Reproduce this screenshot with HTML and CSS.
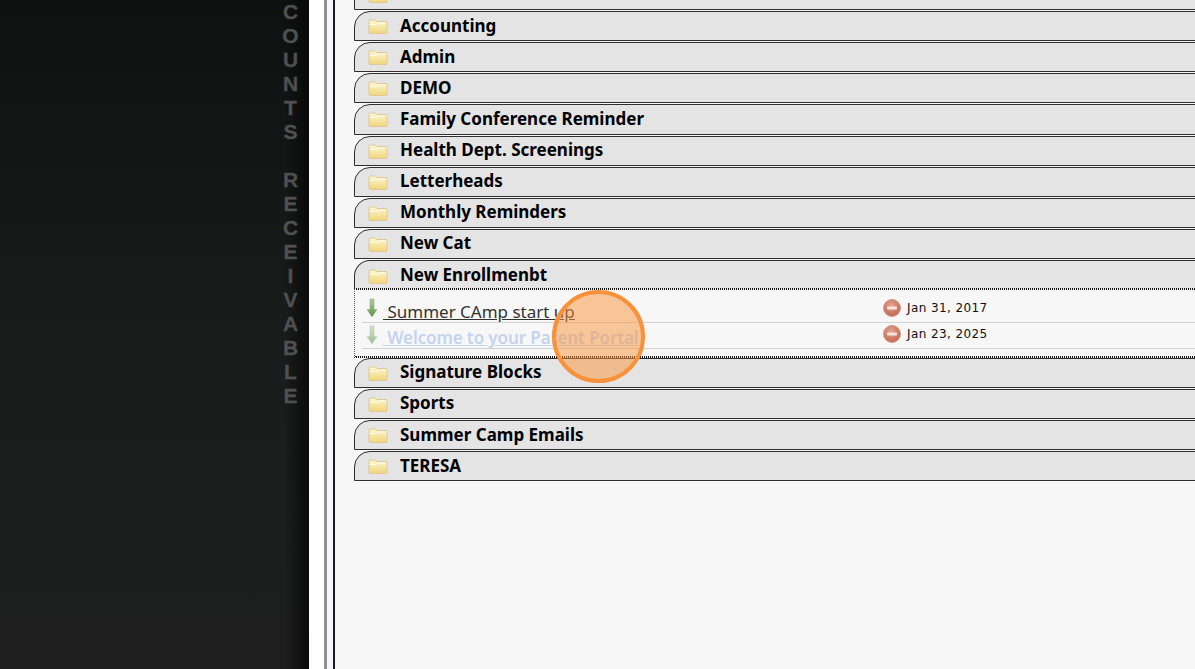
FILE: index.html
```html
<html>
<head>
<title>Accounts Receivable</title>
<link rel="stylesheet" href="styles.css">
</head>
<body>

<svg class="iconDefs">
	<defs>
		<linearGradient id="folderFill" x1="0" y1="0" x2="0" y2="1">
			<stop offset="0" stop-color="#fdf6cf"/>
			<stop offset="1" stop-color="#f0d67c"/>
		</linearGradient>
		<linearGradient id="arrowFill" x1="0" y1="0" x2="0" y2="1">
			<stop offset="0" stop-color="#b3cda1"/>
			<stop offset="1" stop-color="#5d9147"/>
		</linearGradient>
		<radialGradient id="minusFill" cx="0.45" cy="0.35" r="0.75">
			<stop offset="0" stop-color="#e6a594"/>
			<stop offset="1" stop-color="#bb5c46"/>
		</radialGradient>
	</defs>
	<symbol id="folder" viewBox="0 0 20 15">
		<path d="M1 2Q1 1 2 1H7.500L9 2.500H18Q19 2.500 19 3.500V13.500Q19 14.500 18 14.500H2Q1 14.500 1 13.500Z" fill="url(#folderFill)" stroke="#e0c795"/>
		<path d="M2 5.500H9L10.500 4H18" fill="none" stroke="#fffdf0"/>
	</symbol>
	<symbol id="arrow" viewBox="0 0 12 20">
		<path d="M4 1H8V11.500H11L6 19L1 11.500H4Z" fill="url(#arrowFill)" stroke="#8fb07c" stroke-width="0.6"/>
	</symbol>
	<symbol id="minus" viewBox="0 0 18 18">
		<circle cx="9" cy="9" r="8.500" fill="url(#minusFill)" stroke="#d09a8a"/>
		<rect x="4" y="7.500" width="10" height="3" rx="1" fill="#f6e4dc"/>
	</symbol>
</svg>

<div class="page">
	<div class="sidePanel">
		<div class="sideTitle">
			<span>C</span><span>O</span><span>U</span><span>N</span><span>T</span><span>S</span><span>&nbsp;</span>
			<span>R</span><span>E</span><span>C</span><span>E</span><span>I</span><span>V</span><span>A</span><span>B</span><span>L</span><span>E</span>
		</div>
	</div>
	<div class="whiteGap"></div>
	<div class="greyRule"></div>
	<div class="mainPanel">
		<div class="catList">
			<div class="catRow"><svg class="folderIcon"><use href="#folder"/></svg>Unclassified</div>
			<div class="catRow"><svg class="folderIcon"><use href="#folder"/></svg>Accounting</div>
			<div class="catRow"><svg class="folderIcon"><use href="#folder"/></svg>Admin</div>
			<div class="catRow"><svg class="folderIcon"><use href="#folder"/></svg>DEMO</div>
			<div class="catRow"><svg class="folderIcon"><use href="#folder"/></svg>Family Conference Reminder</div>
			<div class="catRow"><svg class="folderIcon"><use href="#folder"/></svg>Health Dept. Screenings</div>
			<div class="catRow"><svg class="folderIcon"><use href="#folder"/></svg>Letterheads</div>
			<div class="catRow"><svg class="folderIcon"><use href="#folder"/></svg>Monthly Reminders</div>
			<div class="catRow"><svg class="folderIcon"><use href="#folder"/></svg>New Cat</div>
			<div class="catRow open"><svg class="folderIcon"><use href="#folder"/></svg>New Enrollmenbt</div>
			<div class="catBody">
				<div class="docRow first">
					<svg class="arrowIcon"><use href="#arrow"/></svg>
					<a class="docLink" href="#">&nbsp;Summer CAmp start up</a>
					<span class="docDate"><svg class="minusIcon"><use href="#minus"/></svg>Jan 31, 2017</span>
				</div>
				<div class="docRow visited">
					<svg class="arrowIcon"><use href="#arrow"/></svg>
					<a class="docLink" href="#">&nbsp;Welcome to your Parent Portal</a>
					<span class="docDate"><svg class="minusIcon"><use href="#minus"/></svg>Jan 23, 2025</span>
				</div>
			</div>
			<div class="catRow"><svg class="folderIcon"><use href="#folder"/></svg>Signature Blocks</div>
			<div class="catRow"><svg class="folderIcon"><use href="#folder"/></svg>Sports</div>
			<div class="catRow"><svg class="folderIcon"><use href="#folder"/></svg>Summer Camp Emails</div>
			<div class="catRow"><svg class="folderIcon"><use href="#folder"/></svg>TERESA</div>
		</div>
	</div>
</div>

<div class="clickMark"></div>

</body>
</html>
```

FILE: styles.css
```css
html, body {
	margin: 0;
	height: 100%;
	overflow: hidden;
}
body {
	background-color: #fff;
	font-family: "Noto Sans", sans-serif;
}
.iconDefs {
	position: absolute;
	width: 0;
	height: 0;
}
.page {
	display: flex;
	height: 669px;
}
.sidePanel {
	width: 309px;
	flex: none;
	overflow: hidden;
	background: linear-gradient(to right, rgba(8, 8, 8, 0) 285px, rgba(8, 8, 8, 0.9) 309px), linear-gradient(#0f1111, #1a1c1c 50%, #1e1e1e);
}
.sideTitle {
	display: flex;
	flex-direction: column;
	align-items: center;
	width: 20px;
	margin-left: 280.5px;
	font-family: "Liberation Sans", sans-serif;
	font-size: 21px;
	font-weight: bold;
	line-height: 24px;
	color: #505053;
	-webkit-text-stroke: 0.3px #505053;
}
.whiteGap {
	width: 15px;
	flex: none;
}
.greyRule {
	width: 6px;
	flex: none;
	border-left: 3px solid #8f8f8f;
	background-color: #f4f6ff;
}
.mainPanel {
	flex: 1;
	min-width: 0;
	border-left: 2px solid #1a1a1a;
	background-color: #f7f7f7;
	padding-left: 19px;
}
.catList {
	margin: -20.125px -30px 0 0;
}
.catRow {
	display: flex;
	align-items: center;
	box-sizing: border-box;
	height: 30.125px;
	margin-bottom: 1px;
	padding: 0 0 2px 13px;
	border: 1px solid #2e2e2e;
	border-top-left-radius: 16px;
	background-color: #e4e4e4;
	font-size: 17px;
	font-weight: 700;
	color: #000;
}
.catRow.open {
	height: 29.125px;
	margin-bottom: 0;
	padding-bottom: 0;
	border-bottom: 1px dotted #111;
}
.folderIcon {
	width: 20px;
	height: 15px;
	margin: 3px 12px 0 0;
	flex: none;
}
.catBody {
	box-sizing: border-box;
	height: 68.6px;
	padding: 1px 0 0 7px;
	border-top: 1px dotted #111;
	border-bottom: 1px dotted #111;
	border-left: 1px dotted #555;
}
.catBody::after {
	content: "";
	display: block;
	margin: 7px 0 0 -7px;
	border-bottom: 1px dotted #111;
}
.docRow {
	display: flex;
	height: 25px;
	border-bottom: 1px solid #d2d2d2;
}
.docRow.first {
	height: 31px;
}
.arrowIcon {
	width: 12px;
	height: 20px;
	margin: 2px 5px 0 4px;
	flex: none;
}
.first .arrowIcon {
	margin-top: 7px;
}
.visited .arrowIcon {
	opacity: 0.55;
}
.docLink {
	width: 500px;
	flex: none;
	align-self: flex-end;
	font-size: 17px;
	line-height: 20px;
	color: #333;
}
.visited .docLink {
	color: #c4d3ee;
	font-weight: 600;
	letter-spacing: -0.1px;
}
.docDate {
	display: flex;
	align-items: center;
	align-self: flex-start;
	height: 26px;
	margin-top: -2px;
	font-family: "DejaVu Sans", sans-serif;
	font-size: 12px;
	letter-spacing: 0.4px;
	color: #111;
}
.first .docDate {
	margin-top: 4px;
}
.minusIcon {
	width: 18px;
	height: 18px;
	margin-right: 6px;
	flex: none;
}
.clickMark {
	position: absolute;
	left: 552px;
	top: 290px;
	box-sizing: border-box;
	width: 93px;
	height: 93px;
	border: 4px solid #f8923a;
	border-radius: 50%;
	background-color: rgba(249, 147, 60, 0.5);
}
```
